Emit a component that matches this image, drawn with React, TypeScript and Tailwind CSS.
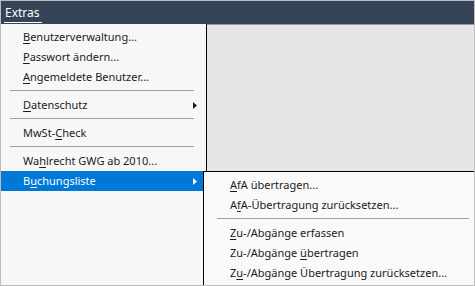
import type { ReactNode } from "react";

type Entry =
  | { kind: "item"; label: ReactNode; arrow?: boolean; active?: boolean }
  | { kind: "sep" };

const u = (s: string) => <span className="underline underline-offset-2">{s}</span>;

const mainItems: Entry[] = [
  { kind: "item", label: <>{u("B")}enutzerverwaltung...</> },
  { kind: "item", label: <>{u("P")}asswort ändern...</> },
  { kind: "item", label: <>{u("A")}ngemeldete Benutzer...</> },
  { kind: "sep" },
  { kind: "item", label: <>{u("D")}atenschutz</>, arrow: true },
  { kind: "sep" },
  { kind: "item", label: <>MwSt-{u("C")}heck</> },
  { kind: "sep" },
  { kind: "item", label: <>Wa{u("h")}lrecht GWG ab 2010...</> },
  { kind: "item", label: <>B{u("u")}chungsliste</>, arrow: true, active: true },
];

const subItems: Entry[] = [
  { kind: "item", label: <>{u("A")}fA übertragen...</> },
  { kind: "item", label: <>A{u("f")}A-Übertragung zurücksetzen...</> },
  { kind: "sep" },
  { kind: "item", label: <>{u("Z")}u-/Abgänge erfassen</> },
  { kind: "item", label: <>Zu-/Abgänge {u("ü")}bertragen</> },
  { kind: "item", label: <>Z{u("u")}-/Abgänge Übertragung zurücksetzen...</> },
];

function Arrow({ white }: { white?: boolean }) {
  return (
    <svg width="4" height="7" viewBox="0 0 4 7" className="absolute right-[9px] top-[7px]">
      <path d="M0 0 L4 3.5 L0 7 Z" fill={white ? "#ffffff" : "#1b1b1b"} />
    </svg>
  );
}

function MenuList({ entries, textLeft, sepClass }: { entries: Entry[]; textLeft: string; sepClass: string }) {
  return (
    <ul className="flex flex-col">
      {entries.map((e, i) =>
        e.kind === "sep" ? (
          <li key={i} className="h-2 pt-[3px]">
            <div className={`h-px bg-[#a0a0a0] ${sepClass}`} />
          </li>
        ) : (
          <li
            key={i}
            className={`relative flex h-5 items-center ${textLeft} ${
              e.active ? "bg-[#0078d7] text-white" : "text-[#1b1b1b]"
            }`}
          >
            <span className="whitespace-nowrap">{e.label}</span>
            {e.arrow && <Arrow white={e.active} />}
          </li>
        )
      )}
    </ul>
  );
}

export default function App() {
  return (
    <div
      className="relative h-[286px] w-[475px] overflow-hidden border border-[#bdbdbd] bg-[#e5e5e5] text-[11px]"
      style={{ fontFamily: '"Segoe UI", "Noto Sans", sans-serif' }}
    >
      <header className="flex h-[23px] items-center bg-[#354457] pl-[3px]">
        <span className="mt-[3px] w-[38px] border-b border-white pb-[2px] pl-px text-[12px] leading-[14px] text-white">
          Extras
        </span>
      </header>

      <div className="flex h-[261px]">
        <nav className="w-[206px] shrink-0 border-r border-black bg-[#f7f7f8] pt-[3px]">
          <MenuList entries={mainItems} textLeft="pl-[22px]" sepClass="ml-[9px] mr-[12px]" />
        </nav>
        <div className="flex-1 border-t border-[#8a9ab3]">
          <div className="h-[2px] bg-[#ebe5e5]" />
        </div>
      </div>

      <div className="absolute left-[202px] top-[170px] w-[272px] border-l border-t border-black bg-[#f9f9f9] pt-[3px] pb-[3px]">
        <MenuList entries={subItems} textLeft="pl-[26px]" sepClass="ml-[13px] mr-[6px]" />
      </div>
    </div>
  );
}
